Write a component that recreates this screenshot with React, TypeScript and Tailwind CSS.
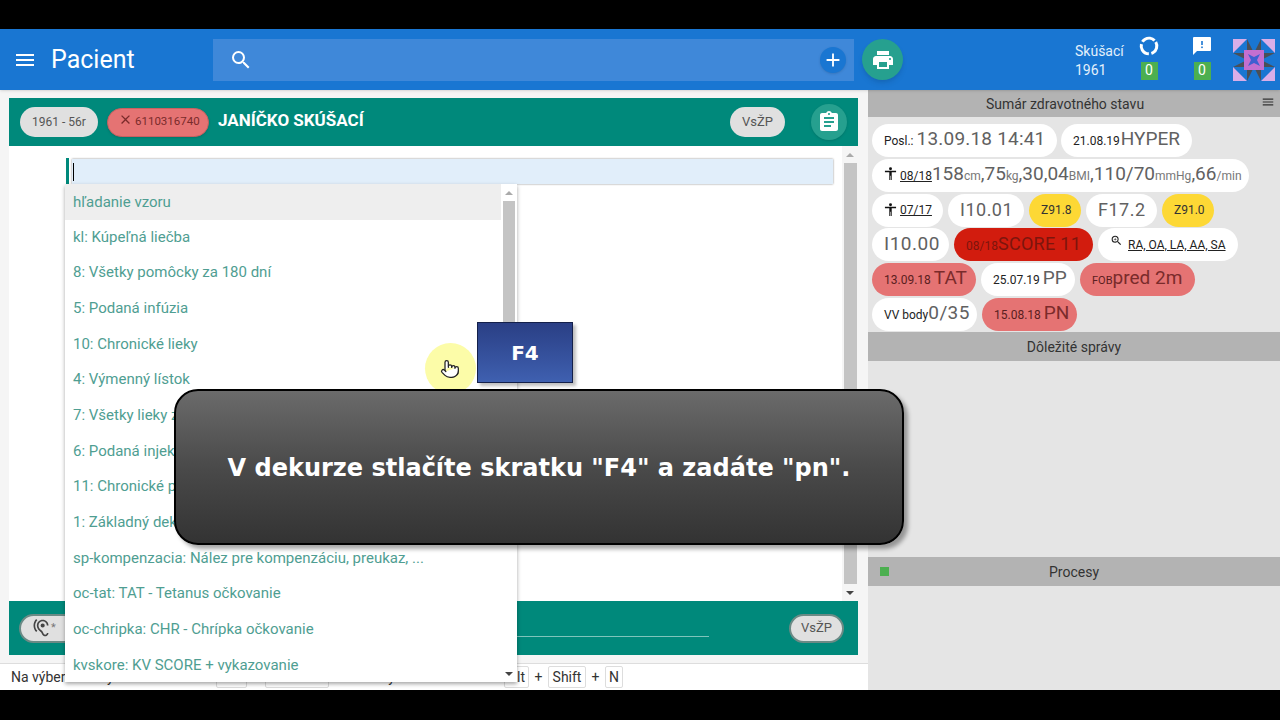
import { ReactNode } from "react";
import { Pointer } from "lucide-react";
import { MdAdd, MdAssignment, MdClose, MdHearing, MdMenu, MdPrint, MdSearch, MdZoomIn } from "react-icons/md";

const items = [
  "kl: Kúpeľná liečba",
  "8: Všetky pomôcky za 180 dní",
  "5: Podaná infúzia",
  "10: Chronické lieky",
  "4: Výmenný lístok",
  "7: Všetky lieky za 180 dní",
  "6: Podaná injekcia",
  "11: Chronické pomôcky",
  "1: Základný dekurz",
  "sp-kompenzacia: Nález pre kompenzáciu, preukaz, ...",
  "oc-tat: TAT - Tetanus očkovanie",
  "oc-chripka: CHR - Chrípka očkovanie",
  "kvskore: KV SCORE + vykazovanie",
];

function Chip({ className = "bg-white text-[#616161]", small = false, children }: { className?: string; small?: boolean; children: ReactNode }) {
  return (
    <div className={"h-[33px] rounded-[17px] flex items-center px-[12px] whitespace-nowrap " + className}>
      <div className={small ? "flex items-baseline" : "flex items-baseline -mt-[2px]"}>{children}</div>
    </div>
  );
}

function Person() {
  return (
    <svg viewBox="0 0 14 14" className="w-[13px] h-[13px] shrink-0 self-center -mt-[2px]" fill="#111">
      <circle cx="7" cy="1.8" r="1.6" />
      <path d="M1 4h12v1.600H8.300V14H7.300V9.500H6.700V14H5.700V5.600H1z" />
    </svg>
  );
}

function Key({ className, children }: { className: string; children: ReactNode }) {
  return <span className={"h-[22px] shrink-0 border border-[#ddd] rounded-[2px] bg-white flex items-center justify-center " + className}>{children}</span>;
}

function Plus({ className }: { className: string }) {
  return <span className={"shrink-0 text-center " + className}>+</span>;
}

function Big({ children }: { children: ReactNode }) {
  return <span className="text-[19px]">{children}</span>;
}

function Unit({ children }: { children: ReactNode }) {
  return <span className="text-[12px] text-[#777]">{children}</span>;
}

function Badge() {
  return <div className="w-[17px] h-[18px] bg-[#4caf50] text-[14px] flex items-center justify-center">0</div>;
}

function SectionBar({ children }: { children: ReactNode }) {
  return <div className="h-[29px] pt-[1px] bg-[#b3b3b3] flex items-center justify-center text-[14px] text-[#333] relative">{children}</div>;
}

export default function App() {
  return (
    <div className="w-[1280px] h-[720px] bg-black flex flex-col overflow-hidden relative font-['Roboto',sans-serif]">
      <div className="h-[29px] shrink-0" />
      <header className="h-[61px] shrink-0 bg-[#1976d2] flex items-center text-white shadow-sm z-10">
        <MdMenu className="ml-[13px] shrink-0" size={24} />
        <div className="ml-[14px] w-[162px] shrink-0 text-[25px] leading-none">Pacient</div>
        <div className="w-[641px] h-[42px] shrink-0 bg-[#3f88d9] flex items-center justify-between pl-[16px] pr-[8px]">
          <MdSearch size={24} />
          <div className="w-[26px] h-[26px] rounded-full bg-[#1976d2] flex items-center justify-center shadow">
            <MdAdd size={22} />
          </div>
        </div>
        <div className="ml-[8px] w-[41px] h-[41px] shrink-0 rounded-full bg-[#26a08f] flex items-center justify-center shadow-md">
          <MdPrint size={24} />
        </div>
        <div className="ml-[172px] mt-[2px] w-[48px] shrink-0 text-[14px] leading-[19px] text-[#e3f0fb]">
          <div>Skúšací</div>
          <div>1961</div>
        </div>
        <div className="w-[52px] -mt-[4px] shrink-0 flex flex-col items-center gap-[6px]">
          <svg viewBox="0 0 20 20" className="w-[20px] h-[20px]" fill="none" stroke="white" strokeWidth="3">
            <circle cx="10" cy="10" r="7.8" strokeDasharray="13.9 2.5" transform="rotate(-30 10 10)" />
          </svg>
          <Badge />
        </div>
        <div className="w-[54px] -mt-[4px] shrink-0 flex flex-col items-center gap-[6px]">
          <svg viewBox="0 0 20 20" className="w-[20px] h-[20px]" fill="white">
            <path d="M2 1h16a1 1 0 0 1 1 1v12a1 1 0 0 1-1 1H5l-4 4V2a1 1 0 0 1 1-1z" />
            <rect x="9.200" y="5" width="1.600" height="4" fill="#1976d2" />
            <rect x="9.200" y="10.500" width="1.600" height="1.600" fill="#1976d2" />
          </svg>
          <Badge />
        </div>
        <svg viewBox="0 0 42 42" className="ml-[4px] w-[42px] h-[42px] shrink-0">
          <path d="M0 0h14L0 14zM42 0v14L28 0zM0 42V28l14 14zM42 42H28l14-14z" fill="#d9aee8" />
          <path d="M14 0l7 14h-7zM28 0v14h-7zM0 14h14v7zM42 14H28v7zM0 28h14v-7zM42 28H28v-7zM14 42V28h7zM28 42V28h-7z" fill="#4a4f57" />
          <rect x="11" y="11" width="20" height="20" fill="#c46fd0" />
          <path d="M15 15l6 3 6-3-3 6 3 6-6-3-6 3 3-6z" fill="#3f5fd0" />
        </svg>
      </header>

      <div className="h-[600px] flex">
        <div className="w-[868px] bg-[#f5f5f5] flex flex-col">
          <div className="flex-1 pt-[8px] pl-[9px] pr-[10px] pb-[8px] flex flex-col">
            <div className="h-[48px] bg-[#00897b] flex items-center pl-[11px] pr-[11px] shrink-0">
              <div className="w-[78px] h-[30px] rounded-[15px] bg-[#e0e0e0] text-[#555] text-[12px] flex items-center justify-center">1961 - 56r</div>
              <div className="ml-[9px] w-[102px] h-[29px] rounded-[15px] bg-[#e57373] border border-[#c96060] text-[#7a2b2b] text-[11.5px] flex items-center pl-[10px] gap-[2px] shadow">
                <MdClose className="-mt-[5px] shrink-0" size={15} />
                6110316740
              </div>
              <div className="ml-[9px] -mt-[2px] text-white text-[17px] font-bold">JANÍČKO SKÚŠACÍ</div>
              <div className="ml-auto w-[55px] h-[30px] rounded-[15px] bg-[#e0e0e0] text-[#555] text-[13px] flex items-center justify-center">VsŽP</div>
              <div className="ml-[26px] w-[36px] h-[36px] rounded-full bg-[#26a08f] text-white flex items-center justify-center shadow">
                <MdAssignment size={24} />
              </div>
            </div>
            <div className="flex-1 bg-white flex min-h-0">
              <div className="flex-1 pt-[12px] pl-[57px] pr-[9px]">
                <div className="h-[27px] flex border-l-[3px] border-[#00897b]">
                  <div className="flex-1 ml-[3px] my-[1px] bg-[#e1eefa] shadow-[0_0_2px_#888] flex items-center pl-[1px]">
                    <div className="w-px h-[18px] bg-black" />
                  </div>
                </div>
              </div>
              <div className="w-[16px] bg-[#f5f5f5] flex flex-col items-center">
                <div className="h-[17px] flex items-center">
                  <div className="w-0 h-0 border-x-[4px] border-x-transparent border-b-[4px] border-b-[#aaa]" />
                </div>
                <div className="flex-1 w-[13px] bg-[#c4c4c4]" />
                <div className="h-[17px] flex items-center">
                  <div className="w-0 h-0 border-x-[4px] border-x-transparent border-t-[4px] border-t-[#444]" />
                </div>
              </div>
            </div>
            <div className="h-[54px] bg-[#00897b] shrink-0 flex items-center pl-[10px] pr-[14px] relative">
              <div className="w-[60px] h-[29px] rounded-[15px] bg-[#e0e0e0] border-2 border-[#6b8a85] flex items-center pl-[10px] text-[#444]">
                <MdHearing size={20} />
                <span className="text-[11px] text-[#777]">*</span>
              </div>
              <div className="ml-auto w-[55px] h-[29px] rounded-[15px] bg-[#e0e0e0] border-2 border-[#6b8a85] text-[#555] text-[13px] flex items-center justify-center">VsŽP</div>
              <div className="absolute left-[500px] right-[149px] top-[35px] h-px bg-[#7fc4bb]" />
            </div>
          </div>
          <div className="h-[27px] shrink-0 bg-white border-t border-[#ddd] flex items-center pl-[11px] text-[14px] text-[#333] whitespace-nowrap">
            <span className="w-[205px] shrink-0">Na výber skratky v dekurze stlačte</span>
            <Key className="w-[31px]">Ctrl</Key>
            <Plus className="w-[18px]" />
            <Key className="w-[64px]">medzera</Key>
            <span className="w-[175px] shrink-0 text-center overflow-hidden">Pre všetky možnosti stlačte</span>
            <Key className="w-[25px]">Alt</Key>
            <Plus className="w-[19px]" />
            <Key className="w-[38px]">Shift</Key>
            <Plus className="w-[19px]" />
            <Key className="w-[18px]">N</Key>
          </div>
        </div>

        <div className="flex-1 bg-[#e5e5e5] flex flex-col">
          <div className="h-[27px] pt-[1px] pr-[18px] bg-[#b3b3b3] flex items-center justify-center text-[14px] text-[#333] relative">
            Sumár zdravotného stavu
            <MdMenu className="absolute right-[5px] top-[5px]" size={14} />
          </div>
          <div className="pl-[4px] pt-[7px] h-[215px] flex flex-col gap-[1.8px] text-[#616161]">
            <div className="flex gap-[4px]">
              <Chip className="bg-white text-[#616161] w-[185px]">
                <span className="text-[12px] text-[#222] mr-[3px]">Posl.:</span>
                <span className="text-[19px] tracking-[0.2px]">13.09.18 14:41</span>
              </Chip>
              <Chip className="bg-white text-[#616161]">
                <span className="text-[12px] text-[#222] mr-[1px]">21.08.19</span>
                <Big>HYPER</Big>
              </Chip>
            </div>
            <div className="flex">
              <Chip className="bg-white text-[#616161] w-[377px]">
                <Person />
                <span className="ml-[3px] text-[12px] text-[#222] underline">08/18</span>
                <Big>158</Big><Unit>cm</Unit>
                <Big>,75</Big><Unit>kg</Unit>
                <Big>,30,04</Big><Unit>BMI</Unit>
                <Big>,110/70</Big><Unit>mmHg</Unit>
                <Big>,66</Big><Unit>/min</Unit>
              </Chip>
            </div>
            <div className="flex gap-[5px]">
              <Chip small className="bg-white text-[#222] w-[71px]"><Person /><span className="ml-[3px] text-[12px] underline">07/17</span></Chip>
              <Chip className="bg-white text-[#616161] w-[76px]"><span className="text-[18px] tracking-[0.5px]">I10.01</span></Chip>
              <Chip small className="bg-[#fdd835] text-[#333] w-[52px]"><span className="text-[12px]">Z91.8</span></Chip>
              <Chip className="bg-white text-[#616161] w-[71px]"><span className="text-[18px] tracking-[0.5px]">F17.2</span></Chip>
              <Chip small className="bg-[#fdd835] text-[#333] w-[52px]"><span className="text-[12px]">Z91.0</span></Chip>
            </div>
            <div className="flex gap-[5px]">
              <Chip className="bg-white text-[#616161] w-[77px]"><span className="text-[19px] tracking-[0.5px]">I10.00</span></Chip>
              <Chip className="bg-[#d21c0e] text-[#7d150d] w-[139px]">
                <span className="text-[12px]">08/18</span>
                <span className="text-[18px] tracking-[0.3px]">SCORE 11</span>
              </Chip>
              <Chip small className="bg-white text-[#222]">
                <MdZoomIn className="mr-[5px] self-start -mt-[2px]" size={13} />
                <span className="text-[12px] underline">RA, OA, LA, AA, SA</span>
              </Chip>
            </div>
            <div className="flex gap-[5px]">
              <Chip className="bg-[#e57373] text-[#7a2b2b] w-[104px]">
                <span className="text-[12px] mr-[3px] text-[#5a2020]">13.09.18</span>
                <Big>TAT</Big>
              </Chip>
              <Chip className="bg-white text-[#616161] w-[94px]">
                <span className="text-[12px] text-[#222] mr-[3px]">25.07.19</span>
                <Big>PP</Big>
              </Chip>
              <Chip className="bg-[#e57373] text-[#7a2b2b] w-[115px]">
                <span className="text-[11px] text-[#5a2020]">FOB</span>
                <Big>pred 2m</Big>
              </Chip>
            </div>
            <div className="flex gap-[5px]">
              <Chip className="bg-white text-[#616161] w-[105px]">
                <span className="text-[12px] text-[#222]">VV body</span>
                <span className="text-[19px] tracking-[0.4px]">0/35</span>
              </Chip>
              <Chip className="bg-[#e57373] text-[#7a2b2b] w-[95px]">
                <span className="text-[12px] mr-[3px] text-[#5a2020]">15.08.18</span>
                <Big>PN</Big>
              </Chip>
            </div>
          </div>
          <SectionBar>Dôležité správy</SectionBar>
          <div className="h-[196px]" />
          <SectionBar>
            <div className="absolute left-[12px] top-[10px] w-[9px] h-[9px] bg-[#4caf50]" />
            Procesy
          </SectionBar>
        </div>
      </div>

      <div className="absolute left-[65px] top-[184px] w-[452px] h-[498px] bg-white shadow-[0_2px_4px_rgba(0,0,0,0.35)] flex overflow-hidden">
        <div className="flex-1 flex flex-col text-[15px] text-[#4f9e92]">
          <div className="h-[36px] shrink-0 bg-[#eeeeee] flex items-center pl-[8px]">hľadanie vzoru</div>
          <div className="-mt-[1px] flex flex-col">
            {items.map((t) => (
              <div key={t} className="h-[35.7px] shrink-0 flex items-center pl-[8px] whitespace-nowrap">{t}</div>
            ))}
          </div>
        </div>
        <div className="w-[16px] flex flex-col items-center">
          <div className="h-[17px] flex items-center">
            <div className="w-0 h-0 border-x-[4px] border-x-transparent border-b-[4px] border-b-[#aaa]" />
          </div>
          <div className="h-[160px] w-[12px] bg-[#c4c4c4]" />
          <div className="flex-1" />
          <div className="h-[17px] flex items-center">
            <div className="w-0 h-0 border-x-[4px] border-x-transparent border-t-[4px] border-t-[#444]" />
          </div>
        </div>
      </div>

      <div className="absolute left-[425px] top-[343px] w-[51px] h-[51px] rounded-full bg-[#fcfca8] flex items-center justify-center">
        <Pointer className="w-[20px] h-[24px] -ml-[2px]" fill="white" stroke="#222" strokeWidth={1.5} />
      </div>

      <div className="absolute left-[477px] top-[322px] w-[96px] h-[61px] bg-gradient-to-b from-[#2a3f85] to-[#3f60b0] border border-[#14204a] shadow-[3px_3px_3px_rgba(0,0,0,0.25)] flex items-center justify-center text-white font-bold text-[20px] font-['DejaVu_Sans',sans-serif]">
        F4
      </div>

      <div className="absolute left-[174px] top-[389px] w-[730px] h-[156px] pt-[2px] rounded-[24px] border-2 border-black bg-gradient-to-b from-[#6b6b6b] via-[#4a4a4a] to-[#333] shadow-[4px_4px_4px_rgba(0,0,0,0.35)] flex items-center justify-center text-white font-bold text-[24px] font-['DejaVu_Sans',sans-serif]">
        V dekurze stlačíte skratku "F4" a zadáte "pn".
      </div>
    </div>
  );
}
